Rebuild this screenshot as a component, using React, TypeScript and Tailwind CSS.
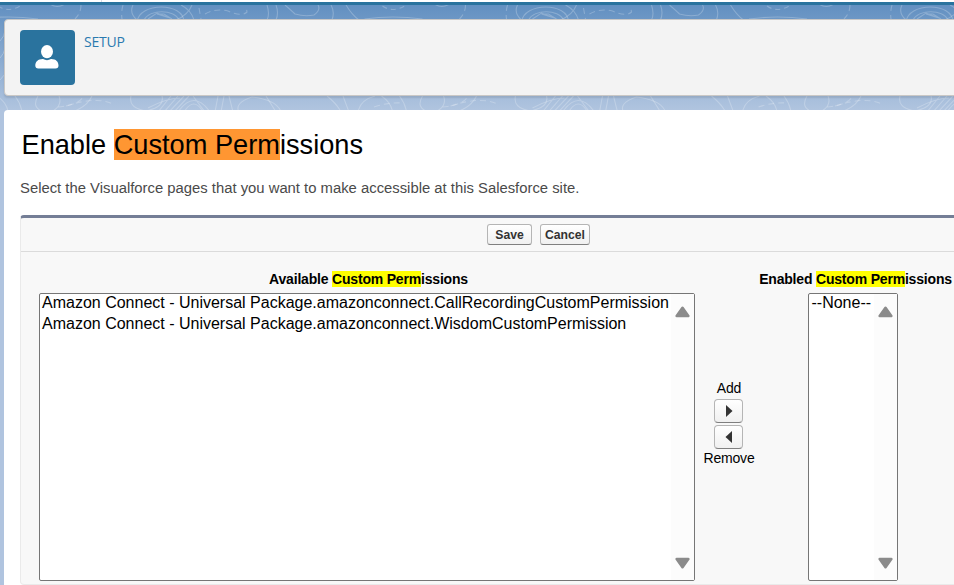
import React from "react";

const TILE = 384.5;

function Contours() {
  return (
    <svg className="absolute left-0 top-0" width="960" height="110" viewBox="0 0 960 110" fill="none">
      <defs>
        <g id="tile" stroke="#ffffff" strokeOpacity="0.23" strokeWidth="1.1">
          <path strokeDasharray="5 4" d="M-2 6 Q8 13 20 6" />
          <path d="M50 4 Q57 9 65 4" />
          <path d="M-20 19 Q8 15 38 19" />
          <path strokeDasharray="6 4" d="M81 5 Q81 13 75 19" />
          <path strokeDasharray="6 4" d="M123 5 Q121 12 122 19" />
          <path d="M133 5 Q129 13 137 20" />
          <path d="M137 22 C139 2 184 2 184 22" />
          <path d="M144 20 C150 9 174 9 179 20" />
          <path d="M148 19 L157 13 L170 18 L157 14 L164 14 L172 19" />
          <path d="M181 5 Q191 10 194 20 M192 5 Q188 15 176 20" />
          <path strokeDasharray="6 4" d="M199 8 L201 19" />
          <path strokeDasharray="6 4" d="M205 14 Q215 8 228 11 Q242 17 247 12 L246 6" />
          <path d="M267 5 Q270 14 267 20 M276 5 Q279 13 276 20" />
          <path d="M285 5 Q292 11 295 14 Q305 17 314 15 Q321 10 318 5" />
          <path d="M331 5 Q335 12 332 20 M346 5 Q352 15 359 20" />
          <path d="M-3 96 Q7 103 8 112 M15 96 Q21 104 22 112" />
          <path d="M38 96 Q31 108 44 112 M59 96 Q63 106 51 112" />
          <path strokeDasharray="6 4" d="M58 107 Q78 105 83 97" />
          <path d="M72 112 Q87 107 92 96" />
          <path d="M131 96 Q128 108 146 111 Q165 107 162 96" />
          <path strokeDasharray="6 4" d="M66 106 Q96 96 113 104" />
          <path d="M148 108 Q167 98 180 98 M158 112 L171 96 M164 112 L178 96 M169 112 L184 96 M174 112 L189 96" />
          <path d="M184 112 Q194 96 203 112 M178 112 Q194 89 210 112 M193 96 L205 112" />
          <path d="M218 96 L215 112 M224 96 L221 112 M229 96 L233 112" />
          <path d="M239 112 Q234 103 252 97 Q277 100 281 112" />
          <path d="M266 96 L276 112 M327 96 Q337 104 341 112 M343 96 L349 112" />
          <path d="M358 112 Q360 100 375 96" />
          <path strokeDasharray="6 4" d="M374 107 Q389 102 402 103" />
        </g>
      </defs>
      <use href="#tile" />
      <use href="#tile" x={TILE} />
      <use href="#tile" x={TILE * 2} />
      <g stroke="#ffffff" strokeOpacity="0.25">
        <path d="M0 41 Q5 36 5 30 M0 58 Q4 54 5 48 M0 80 L5 74" />
      </g>
    </svg>
  );
}

function Arrow({ down = false }: { down?: boolean }) {
  return (
    <svg width="16" height="12" viewBox="0 0 16 12">
      <path
        d={down ? "M8.5 10.2 L14.3 2 L2.7 2 Z" : "M8.5 1.8 L14.3 10 L2.7 10 Z"}
        fill="#8b8b8b"
        stroke="#8b8b8b"
        strokeWidth="2.6"
        strokeLinejoin="round"
      />
    </svg>
  );
}

function ListBox({ width, items, pad }: { width: string; items: string[]; pad: string }) {
  return (
    <div className={`flex h-[288px] rounded-[2px] border border-[#767676] bg-white ${width}`}>
      <ul className={`-mt-0.5 min-w-0 flex-1 text-[16px] leading-[21px] whitespace-nowrap text-black ${pad}`}>
        {items.map((t) => (
          <li key={t} className="h-[21px]">{t}</li>
        ))}
      </ul>
      <div className="flex w-[23px] flex-col items-center justify-between bg-[#fcfcfc] pt-3 pr-px pb-[11px]">
        <Arrow />
        <Arrow down />
      </div>
    </div>
  );
}

function Heading({ first }: { first: string }) {
  return (
    <div className="text-[14px] leading-[16px] font-bold tracking-[-0.19px] whitespace-nowrap text-black">
      {first} <span className="bg-[#ffff00]">Custom Perm</span>issions
    </div>
  );
}

const buttonStyle =
  "border border-[#b5b5b5] border-b-[#7f7f7f] bg-linear-to-b from-white to-[#f0f0f0]";

export default function App() {
  return (
    <div className="h-[585px] w-[954px] overflow-hidden bg-white font-['Liberation_Sans',Arial,sans-serif]">
      <div className="flex h-0.5 bg-white">
        <div className="ml-[101px] w-px bg-[#d8dde6]" />
      </div>
      <div className="h-[3px] bg-[#2a739e]" />
      <div className="relative h-[580px] bg-[#b0c4df] bg-[linear-gradient(#6290c1_0px,#b0c4df_105px)] pt-[14px] pl-1">
        <div className="absolute -top-[5px] left-0 h-[110px] w-full overflow-hidden [clip-path:inset(5px_0_0_0)]">
          <Contours />
        </div>
        <header className="relative flex h-[77px] w-[970px] rounded border border-[#c9c7c5] bg-[#f3f3f3] pt-[10px] pl-[15px] shadow-[0_2px_2px_rgba(0,0,0,0.1)]">
          <div className="flex h-[55px] w-[55px] items-center justify-center rounded bg-[#2a739e] pr-px pb-px">
            <svg width="24" height="24" viewBox="0 0 24 24" fill="#ffffff">
              <ellipse cx="12" cy="6.6" rx="6" ry="6.6" />
              <path d="M8 14.1 Q12 16.4 16 14.1 C21 14 23.5 17 23.5 20.5 Q23.5 23.4 20.5 23.4 L3.3 23.4 Q.3 23.4 .3 20.5 C.3 17 3 14 8 14.1 Z" />
            </svg>
          </div>
          <span className="ml-[9px] mt-[3px] h-[18px] font-['Open_Sans','Noto_Sans',sans-serif] text-[14px] leading-[18px] tracking-[-0.2px] text-[#2a7ab0]">SETUP</span>
        </header>
        <main className="relative mt-[14px] h-[480px] w-[970px] rounded-t bg-white pt-[19px] pl-4">
          <h1 className="ml-[1.5px] text-[27.2px] leading-[31px] whitespace-nowrap text-black">
            Enable <span className="bg-[#ff9632]">Custom Perm</span>issions
          </h1>
          <p className="mt-[19px] text-[14.84px] leading-[18px] whitespace-nowrap text-[#4a4a4a]">
            Select the Visualforce pages that you want to make accessible at this Salesforce site.
          </p>
          <section className="mt-[18px] h-[370px] rounded border border-t-[3px] border-[#eaeaea] border-t-[#747e96] bg-[#f8f8f8]">
            <div className="flex h-[34px] gap-2 border-b border-[#dbdbdb] pt-[6px] pl-[466px]">
              <button className={`${buttonStyle} h-[21px] w-[45px] rounded-[3px] text-[12.2px] leading-[18px] font-bold text-[#333]`}>Save</button>
              <button className={`${buttonStyle} h-[21px] w-[50px] rounded-[3px] text-[12.2px] leading-[18px] font-bold text-[#333]`}>Cancel</button>
            </div>
            <div className="flex pt-[19px] pl-[18px]">
              <div className="flex w-[656px] flex-col">
                <div className="mb-[6px] flex justify-center pl-[3px]"><Heading first="Available" /></div>
                <ListBox
                  width="w-[656px]"
                  pad="pl-[2px]"
                  items={[
                    "Amazon Connect - Universal Package.amazonconnect.CallRecordingCustomPermission",
                    "Amazon Connect - Universal Package.amazonconnect.WisdomCustomPermission",
                  ]}
                />
              </div>
              <div className="flex w-[64px] flex-col items-center pt-[109px] pl-1 text-[14px] leading-[16px] tracking-[-0.2px] text-black">
                <span>Add</span>
                <button className={`${buttonStyle} mt-[3px] mr-px flex h-6 w-[29px] items-center justify-center rounded-[4px] pl-px`}>
                  <svg width="8" height="14" viewBox="0 0 8 14"><path d="M1 1 L7.5 7 L1 13 Z" fill="#333" /></svg>
                </button>
                <button className={`${buttonStyle} mt-[2px] mr-px flex h-6 w-[29px] items-center justify-center rounded-[4px] pl-px`}>
                  <svg width="8" height="14" viewBox="0 0 8 14"><path d="M7 1 L.5 7 L7 13 Z" fill="#333" /></svg>
                </button>
                <span className="mt-[1px]">Remove</span>
              </div>
              <div className="flex w-[193px] flex-col items-center">
                <div className="mb-[6px]"><Heading first="Enabled" /></div>
                <ListBox width="w-[90px] ml-[-6px]" pad="pl-[3px]" items={["--None--"]} />
              </div>
            </div>
          </section>
        </main>
      </div>
    </div>
  );
}
